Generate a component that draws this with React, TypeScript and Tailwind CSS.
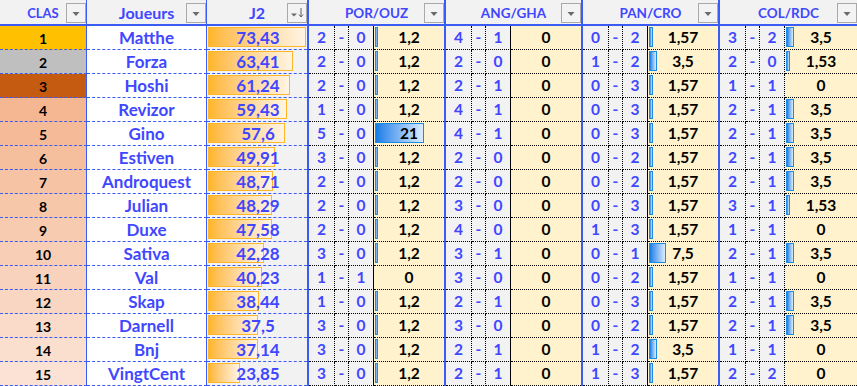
const BLUE = "text-[#3f47ff]";

type Match = [string, string, string];
type Row = { rank: number; name: string; j2: string; m: Match[] };

const rows: Row[] = [
  { rank: 1, name: "Matthe", j2: "73,43", m: [["2", "0", "1,2"], ["4", "1", "0"], ["0", "2", "1,57"], ["3", "2", "3,5"]] },
  { rank: 2, name: "Forza", j2: "63,41", m: [["2", "0", "1,2"], ["2", "0", "0"], ["1", "2", "3,5"], ["2", "0", "1,53"]] },
  { rank: 3, name: "Hoshi", j2: "61,24", m: [["2", "0", "1,2"], ["2", "1", "0"], ["0", "3", "1,57"], ["1", "1", "0"]] },
  { rank: 4, name: "Revizor", j2: "59,43", m: [["1", "0", "1,2"], ["4", "1", "0"], ["0", "3", "1,57"], ["2", "1", "3,5"]] },
  { rank: 5, name: "Gino", j2: "57,6", m: [["5", "0", "21"], ["4", "1", "0"], ["0", "3", "1,57"], ["2", "1", "3,5"]] },
  { rank: 6, name: "Estiven", j2: "49,91", m: [["3", "0", "1,2"], ["2", "0", "0"], ["0", "2", "1,57"], ["2", "1", "3,5"]] },
  { rank: 7, name: "Androquest", j2: "48,71", m: [["2", "0", "1,2"], ["2", "0", "0"], ["0", "2", "1,57"], ["2", "1", "3,5"]] },
  { rank: 8, name: "Julian", j2: "48,29", m: [["2", "0", "1,2"], ["3", "0", "0"], ["0", "3", "1,57"], ["3", "1", "1,53"]] },
  { rank: 9, name: "Duxe", j2: "47,58", m: [["2", "0", "1,2"], ["4", "0", "0"], ["1", "3", "1,57"], ["1", "1", "0"]] },
  { rank: 10, name: "Sativa", j2: "42,28", m: [["3", "0", "1,2"], ["3", "1", "0"], ["0", "1", "7,5"], ["2", "1", "3,5"]] },
  { rank: 11, name: "Val", j2: "40,23", m: [["1", "1", "0"], ["3", "0", "0"], ["0", "2", "1,57"], ["1", "1", "0"]] },
  { rank: 12, name: "Skap", j2: "38,44", m: [["1", "0", "1,2"], ["2", "1", "0"], ["0", "3", "1,57"], ["2", "1", "3,5"]] },
  { rank: 13, name: "Darnell", j2: "37,5", m: [["3", "0", "1,2"], ["3", "0", "0"], ["0", "2", "1,57"], ["2", "1", "3,5"]] },
  { rank: 14, name: "Bnj", j2: "37,14", m: [["3", "0", "1,2"], ["2", "1", "0"], ["1", "2", "3,5"], ["1", "1", "0"]] },
  { rank: 15, name: "VingtCent", j2: "23,85", m: [["3", "0", "1,2"], ["2", "1", "0"], ["1", "3", "1,57"], ["2", "2", "0"]] },
];

const groups = ["POR/OUZ", "ANG/GHA", "PAN/CRO", "COL/RDC"];

const num = (s: string) => parseFloat(s.replace(",", "."));

function rankColor(rank: number): string {
  if (rank === 1) return "#ffc000";
  if (rank === 2) return "#bfbfbf";
  if (rank === 3) return "#c55a11";
  const a = [244, 183, 146];
  const b = [251, 226, 212];
  const t = (rank - 4) / 11;
  const c = a.map((v, i) => Math.round(v + (b[i] - v) * t));
  return `rgb(${c[0]},${c[1]},${c[2]})`;
}

function FilterButton({ sorted }: { sorted?: boolean }) {
  return (
    <div className="absolute right-0 top-[3px] flex h-[20px] w-[20px] items-center justify-center border border-[#a9a9a9] bg-[#f3f3f3]">
      <svg width="18" height="18" viewBox="0 0 18 18">
        {sorted ? (
          <>
            <path d="M3 9.5h6l-3 3z" fill="#6a6a6a" />
            <path d="M13 4v8.5" stroke="#5f5f5f" strokeWidth="1" />
            <path d="M11 10.5l2 2.5 2-2.5" stroke="#5f5f5f" strokeWidth="1" fill="none" />
          </>
        ) : (
          <path d="M5.5 8h7l-3.5 4z" fill="#6a6a6a" />
        )}
      </svg>
    </div>
  );
}

function Header() {
  return (
    <div className="flex h-[26px] border-b-2 border-[#3a5cf5] bg-[#f2f2f2] font-bold">
      <div className={`relative flex w-[87px] justify-center border-r border-[#3a5cf5] pt-[7px] text-[13px] ${BLUE}`}>
        CLAS
        <FilterButton />
      </div>
      <div className={`relative flex w-[120px] justify-center border-r border-[#3a5cf5] pt-[5px] text-[16px] ${BLUE}`}>
        Joueurs
        <FilterButton />
      </div>
      <div className={`relative flex w-[100px] justify-center pt-[5px] text-[16px] ${BLUE}`}>
        J2
        <FilterButton sorted />
      </div>
      {groups.map((g, i) => (
        <div
          key={g}
          className={`relative flex ${i === 3 ? "flex-1" : "w-[137px]"} justify-center border-l-2 border-[#3a5cf5] pt-[7px] text-[13.5px] ${BLUE}`}
        >
          {g}
          <FilterButton />
        </div>
      ))}
    </div>
  );
}

function MatchCells({ m, last }: { m: Match; last: boolean }) {
  const pts = num(m[2]);
  const bar = pts > 0 ? Math.max(3, Math.round(pts * 2.33)) : 0;
  return (
    <div className={`flex ${last ? "flex-1" : "w-[137px]"} border-l-2 border-[#3a5cf5] text-[15.5px] font-bold`}>
      <div className={`flex w-[26px] items-center justify-center border-r border-b border-black bg-[#f2f2f2] [border-style:dotted] ${BLUE}`}>
        {m[0]}
      </div>
      <div className={`flex w-[14px] items-center justify-center border-r border-b border-black bg-[#f2f2f2] [border-style:dotted] ${BLUE}`}>
        -
      </div>
      <div
        className={`flex w-[25px] items-center justify-center border-r border-b border-black bg-[#f2f2f2] [border-bottom-style:dotted] ${last ? "[border-right-style:dotted]" : ""} ${BLUE}`}
      >
        {m[1]}
      </div>
      <div className="relative flex flex-1 items-center justify-center border-b border-black bg-[#fff2cc] text-black [border-bottom-style:dotted]">
        {bar > 0 && (
          <div
            className="absolute left-[1px] top-[1px] h-[20px] border border-[#1b8be6] bg-gradient-to-r from-[#0a7de6] to-[#d9ecfd]"
            style={{ width: bar }}
          />
        )}
        <span className="relative">{m[2]}</span>
      </div>
    </div>
  );
}

function DataRow({ r }: { r: Row }) {
  const w = Math.round((num(r.j2) / 73.43) * 98);
  return (
    <div className="flex h-[24px]">
      <div
        className="flex w-[87px] items-center justify-center border-r border-b border-[#3a5cf5] pt-[3px] text-[14px] font-bold text-black [border-bottom-style:dashed]"
        style={{ backgroundColor: rankColor(r.rank) }}
      >
        {r.rank}
      </div>
      <div className={`flex w-[120px] items-center justify-center border-r border-b border-[#3a5cf5] bg-white text-[17px] font-bold [border-bottom-style:dashed] ${BLUE}`}>
        {r.name}
      </div>
      <div className={`relative flex w-[100px] items-center justify-center border-b border-[#3a5cf5] bg-[#f2f2f2] pl-[2px] text-[17px] font-bold [border-bottom-style:dashed] ${BLUE}`}>
        <div
          className="absolute left-[1px] top-[1px] h-[20px] border border-[#ffb628] bg-gradient-to-r from-[#ffb628] to-[#fff4e4]"
          style={{ width: w }}
        />
        <span className="relative">{r.j2}</span>
      </div>
      {r.m.map((m, i) => (
        <MatchCells key={i} m={m} last={i === 3} />
      ))}
    </div>
  );
}

export default function App(): JSX.Element {
  return (
    <div className="h-[386px] w-[857px] overflow-hidden bg-white font-['Lato',sans-serif] leading-none">
      <Header />
      {rows.map((r) => (
        <DataRow key={r.rank} r={r} />
      ))}
    </div>
  );
}
